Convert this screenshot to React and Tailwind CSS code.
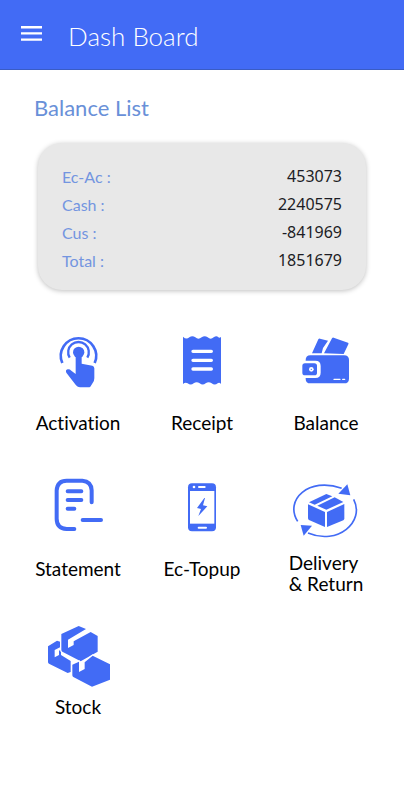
const balances = [
  { label: "Ec-Ac :", value: "453073" },
  { label: "Cash :", value: "2240575" },
  { label: "Cus :", value: "-841969" },
  { label: "Total :", value: "1851679" },
];

const Icon = ({ viewBox, children }) => (
  <svg
    viewBox={viewBox}
    className="w-16 h-16 overflow-visible text-[#426bf5]"
    fill="currentColor"
    stroke="none"
    strokeLinecap="round"
    strokeLinejoin="round"
    aria-hidden="true"
  >
    {children}
  </svg>
);

const ActivationIcon = () => (
  <Icon viewBox="18 9 192 192">
    <g fill="none" stroke="currentColor">
      <path d="M67 114A53 53 0 1 1 164 114" strokeWidth="8" strokeLinecap="butt" />
      <path d="M89 98A31 31 0 1 1 142 98" strokeWidth="7" strokeLinecap="butt" />
    </g>
    <circle cx="116" cy="82" r="17" />
    <path d="M107 82h18v34l32 6q6 2 6 8v30q0 8-5 14l-7 11q-2 2-6 2h-25q-7 0-12-6l-29-38q-4-8 4-10 6-1 11 4l13 10z" />
  </Icon>
);

const ReceiptIcon = () => (
  <Icon viewBox="15 9 192 192">
    <path d="M54 35q10 10 19 2 9-7 18 0 9 8 19 0 9-7 18 0 9 8 18 0 9-7 14 0 5 3 8-2v142q-5-6-10-2-9 7-18 0-9-7-18 0-9 7-18 0-9-7-18 0-9 7-18 0-7-4-14 2z" />
    <path d="M84 79h55M84 106h55M84 132h55" stroke="#fff" strokeWidth="10" />
  </Icon>
);

const WalletIcon = () => (
  <Icon viewBox="12 9 192 192">
    <path d="M66 85L85 43q2-3 5-2l24 6-15 22-4 16z" />
    <path d="M102 85l24-45q2-3 5-2l43 15q3 2 1 5l-14 29z" />
    <path d="M61 91h101q15 0 15 14v56q0 14-15 14H61q-14 0-14-14v-56q0-14 14-14z" />
    <path d="M39 113h37q10 0 10 10v20q0 10-10 10H39" fill="none" stroke="#fff" strokeWidth="12" />
    <rect x="37" y="115" width="44" height="36" rx="8" />
    <circle cx="64" cy="133" r="7" fill="#fff" />
    <circle cx="64" cy="133" r="2" />
    <path d="M132 163h18M158 163h6" stroke="#fff" strokeWidth="4" />
  </Icon>
);

const StatementIcon = () => (
  <Icon viewBox="18 15 192 192">
    <g fill="none" stroke="currentColor" strokeWidth="12">
      <path d="M103 180H80Q50 178 50 149V64q2-29 30-29h47q27 2 28 29v36" />
      <path d="M83 67h41M83 93h41M83 119h20M128 153h55" />
    </g>
  </Icon>
);

const TopupIcon = () => (
  <Icon viewBox="15 15 192 192">
    <rect x="69" y="43" width="84" height="144" rx="12" />
    <path d="M75 66h73v98H75z" fill="#fff" />
    <circle cx="87" cy="54" r="4" fill="#fff" />
    <path d="M102 54h17M101 176h22" stroke="#fff" strokeWidth="6" />
    <path d="M118 87l-22 30 12 3-8 21 27-29-13-3 6-22z" />
  </Icon>
);

const DeliveryIcon = () => (
  <Icon viewBox="27 0 192 192">
    <g fill="none" stroke="currentColor" strokeWidth="5" strokeLinecap="butt">
      <path d="M38 142C-3 78 72 7 170 43" />
      <path d="M206 76C241 143 158 215 69 177" />
    </g>
    <path d="M187 31l9 33-36-5z" />
    <path d="M47 153l34 2-25 30z" />
    <path d="M124 60l18 7-53 25-17-7z" />
    <path d="M149 70l26 14-51 23-27-12z" />
    <path d="M69 91l51 23v45l-48-21q-3-2-3-6z" />
    <path d="M126 114l52-24v43q0 4-3 6l-49 20z" />
  </Icon>
);

const StockIcon = () => (
  <Icon viewBox="18 9 192 192">
    <g stroke="#fff" strokeWidth="8" paintOrder="stroke">
      <path d="M24 82l27-17 12 4v14l-19 10v22l13-7V95l6-3v16l29 18v33l-9 3-56-28q-3-2-3-5z" />
      <path d="M64 45l52-24 22 9-54 32v25l17-9V67l51-28 21 12v47l-51 29-55-29q-3-2-3-6z" />
      <path d="M97 137l20-9v31l17-9v-20l24-20 52 26v46l-54 21-56-29q-3-2-3-5z" />
    </g>
  </Icon>
);

const menu = [
  { label: "Activation", icon: ActivationIcon, spacing: "gap-5" },
  { label: "Receipt", icon: ReceiptIcon, spacing: "gap-5" },
  { label: "Balance", icon: WalletIcon, spacing: "gap-5" },
  { label: "Statement", icon: StatementIcon, spacing: "gap-5" },
  { label: "Ec-Topup", icon: TopupIcon, spacing: "gap-5" },
  { label: "Delivery\n& Return", icon: DeliveryIcon, spacing: "gap-3.5" },
  { label: "Stock", icon: StockIcon, spacing: "gap-2.5" },
];

const Header = () => (
  <header className="flex items-center gap-6 h-[70px] px-5 bg-[#426bf5] border-b border-[#3a5cc4] text-white">
    <button type="button" aria-label="Open menu" className="shrink-0">
      <svg viewBox="0 0 24 24" className="w-6 h-6" fill="currentColor" aria-hidden="true">
        <path d="M1 3h21v2.4H1zM1 9.2h21v2.4H1zM1 15.4h21v2.4H1z" />
      </svg>
    </button>
    <h1 className="pt-0.5 text-[26px] leading-8 font-light">Dash Board</h1>
  </header>
);

const BalanceCard = () => (
  <dl className="mx-[38px] mt-[21px] px-6 pt-[19px] pb-4 rounded-3xl bg-[#e8e8e8] shadow-[0_1px_5px_rgba(0,0,0,0.25)]">
    {balances.map((b) => (
      <div key={b.label} className="flex items-center justify-between h-7">
        <dt className="pt-0.5 text-base leading-6 text-[#7395e0]">{b.label}</dt>
        <dd className="text-base leading-6 text-[#1c1c24] font-['Noto_Sans',sans-serif]">
          {b.value}
        </dd>
      </div>
    ))}
  </dl>
);

export default function App() {
  return (
    <div className="min-h-screen bg-white font-['Lato',sans-serif] [font-variant-ligatures:none]">
      <Header />
      <main>
        <h2 className="px-[34px] pt-6 text-[22px] leading-7 text-[#6990d8]">Balance List</h2>
        <BalanceCard />
        <nav className="grid grid-cols-3 gap-y-7 px-4 mt-[38px]">
          {menu.map(({ label, icon: MenuIcon, spacing }) => (
            <button
              key={label}
              type="button"
              className={`flex flex-col items-center ${spacing} cursor-pointer`}
            >
              <MenuIcon />
              <span className="min-h-[34px] text-[19px] leading-[21px] text-left whitespace-pre-line text-black">
                {label}
              </span>
            </button>
          ))}
        </nav>
      </main>
    </div>
  );
}
